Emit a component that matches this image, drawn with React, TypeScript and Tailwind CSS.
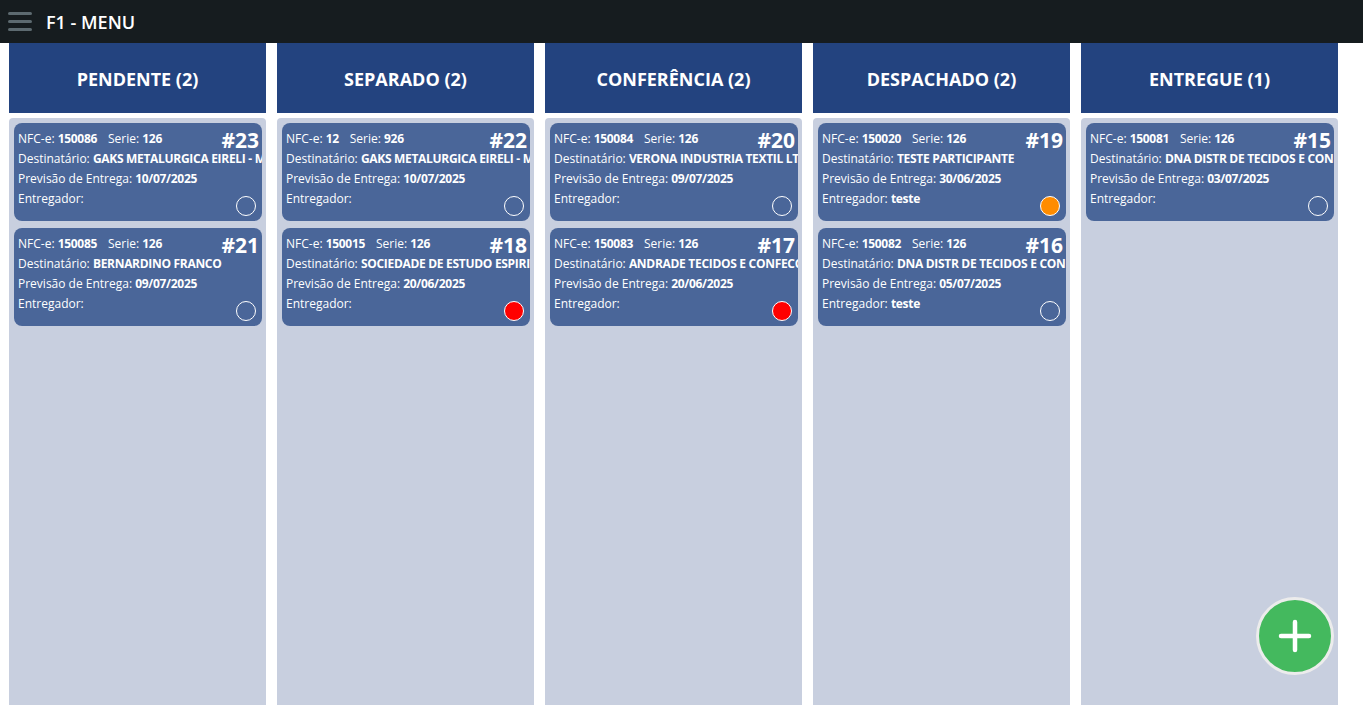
type Pedido = {
  id: number
  nfce: string
  serie: string
  destinatario: string
  previsao: string
  entregador?: string
  status?: 'red' | 'orange'
}

type Coluna = {
  titulo: string
  pedidos: Pedido[]
}

const colunas: Coluna[] = [
  {
    titulo: 'PENDENTE',
    pedidos: [
      { id: 23, nfce: '150086', serie: '126', destinatario: 'GAKS METALURGICA EIRELI - ME', previsao: '10/07/2025' },
      { id: 21, nfce: '150085', serie: '126', destinatario: 'BERNARDINO FRANCO', previsao: '09/07/2025' },
    ],
  },
  {
    titulo: 'SEPARADO',
    pedidos: [
      { id: 22, nfce: '12', serie: '926', destinatario: 'GAKS METALURGICA EIRELI - ME', previsao: '10/07/2025' },
      { id: 18, nfce: '150015', serie: '126', destinatario: 'SOCIEDADE DE ESTUDO ESPIRITA', previsao: '20/06/2025', status: 'red' },
    ],
  },
  {
    titulo: 'CONFERÊNCIA',
    pedidos: [
      { id: 20, nfce: '150084', serie: '126', destinatario: 'VERONA INDUSTRIA TEXTIL LTDA', previsao: '09/07/2025' },
      { id: 17, nfce: '150083', serie: '126', destinatario: 'ANDRADE TECIDOS E CONFECCOES', previsao: '20/06/2025', status: 'red' },
    ],
  },
  {
    titulo: 'DESPACHADO',
    pedidos: [
      { id: 19, nfce: '150020', serie: '126', destinatario: 'TESTE PARTICIPANTE', previsao: '30/06/2025', entregador: 'teste', status: 'orange' },
      { id: 16, nfce: '150082', serie: '126', destinatario: 'DNA DISTR DE TECIDOS E CONFECCOES', previsao: '05/07/2025', entregador: 'teste' },
    ],
  },
  {
    titulo: 'ENTREGUE',
    pedidos: [
      { id: 15, nfce: '150081', serie: '126', destinatario: 'DNA DISTR DE TECIDOS E CONFECCOES', previsao: '03/07/2025' },
    ],
  },
]

function Card({ p }: { p: Pedido }) {
  const dot =
    p.status === 'red' ? 'bg-[#ff0000]' : p.status === 'orange' ? 'bg-[#ff8c00]' : 'bg-transparent'
  return (
    <div className="relative h-[98px] shrink-0 overflow-hidden rounded-[8px] bg-[#4a6699] pl-[4px] pt-[6px] text-[12px] leading-[20px] text-white">
      <div className="whitespace-nowrap">
        NFC-e: <b className="font-bold tracking-[-0.3px]">{p.nfce}</b>
        <span className="ml-[11px]">Serie: </span>
        <b className="font-bold tracking-[-0.3px]">{p.serie}</b>
      </div>
      <div className="whitespace-nowrap">
        Destinatário: <b className="font-bold tracking-[-0.3px]">{p.destinatario}</b>
      </div>
      <div className="whitespace-nowrap">
        Previsão de Entrega: <b className="font-bold tracking-[-0.3px]">{p.previsao}</b>
      </div>
      <div className="whitespace-nowrap">
        Entregador: {p.entregador && <b className="font-bold tracking-[-0.3px]">{p.entregador}</b>}
      </div>
      <div className="absolute right-[3px] top-[6px] text-[21px] font-bold leading-[22px]">#{p.id}</div>
      <div className={'absolute bottom-[5px] right-[6px] h-[20px] w-[20px] rounded-full border border-white ' + dot} />
    </div>
  )
}

export default function App() {
  return (
    <div
      className="flex h-screen flex-col overflow-hidden bg-white"
      style={{ fontFamily: '"Open Sans", "Noto Sans", sans-serif' }}
    >
      <header className="flex h-[43px] shrink-0 items-center bg-[#161c1f] pl-[8px]">
        <div className="flex w-[24px] flex-col gap-[5px]">
          <span className="h-[3px] rounded-full bg-[#5d6a70]" />
          <span className="h-[3px] rounded-full bg-[#5d6a70]" />
          <span className="h-[3px] rounded-full bg-[#5d6a70]" />
        </div>
        <span className="ml-[14px] mt-[2px] text-[18px] font-semibold text-white">F1 - MENU</span>
      </header>

      <main className="flex min-h-0 flex-1 gap-[11px] pl-[9px]">
        {colunas.map((c) => (
          <section key={c.titulo} className="flex w-[257px] shrink-0 flex-col">
            <div className="flex h-[70px] shrink-0 items-center justify-center pt-[2px] bg-[#23437f] text-[18px] font-bold text-white">
              {c.titulo} ({c.pedidos.length})
            </div>
            <div className="mt-[5px] flex flex-1 flex-col gap-[7px] rounded-t-[4px] bg-[#c8cfdf] pl-[5px] pr-[4px] pt-[5px]">
              {c.pedidos.map((p) => (
                <Card key={p.id} p={p} />
              ))}
            </div>
          </section>
        ))}
      </main>

      <button className="absolute left-[1256px] top-[597px] flex h-[78px] w-[78px] items-center justify-center rounded-full border-[3px] border-[#ececec] bg-[#44b95e]">
        <svg width="34" height="34" viewBox="0 0 34 34">
          <path d="M17 3v28M3 17h28" stroke="white" strokeWidth="4.5" strokeLinecap="round" />
        </svg>
      </button>
    </div>
  )
}
